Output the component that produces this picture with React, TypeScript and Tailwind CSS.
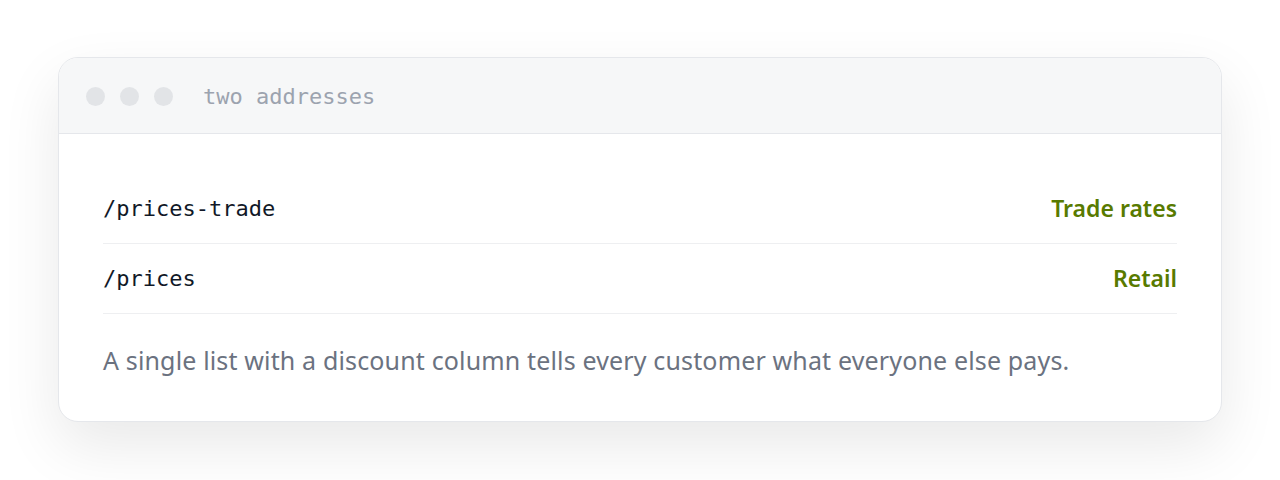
const mono = "font-['Consolas','DejaVu_Sans_Mono',monospace]"
const sans = "font-['Segoe_UI','Noto_Sans',sans-serif]"

const routes = [
  { path: '/prices-trade', label: 'Trade rates' },
  { path: '/prices', label: 'Retail' },
]

export default function App() {
  return (
    <div className="min-h-[480px] bg-white px-[58px] pt-[57px]">
      <div className="overflow-hidden rounded-[20px] border border-[#e5e7eb] bg-white shadow-[0_24px_60px_rgba(0,0,0,0.09)]">
        <div className="flex h-[76px] items-center gap-[15px] border-b border-[#e5e7eb] bg-[#f6f7f8] pt-[2px] pl-[27px]">
          <span className="h-[19px] w-[19px] rounded-full bg-[#e2e4e7]" />
          <span className="h-[19px] w-[19px] rounded-full bg-[#e2e4e7]" />
          <span className="h-[19px] w-[19px] rounded-full bg-[#e2e4e7]" />
          <span className={`${mono} ml-[15px] text-[22px] text-[#9ca3af]`}>two addresses</span>
        </div>

        <div className="px-[44px] pt-[40px] pb-[45px]">
          {routes.map((r) => (
            <div key={r.path} className="flex h-[70px] items-center justify-between border-b border-[#eeeff1]">
              <span className={`${mono} text-[22px] text-[#111827]`}>{r.path}</span>
              <span className={`${sans} text-[23px] font-semibold text-[#587a00]`}>{r.label}</span>
            </div>
          ))}
          <p className={`${sans} mt-[30px] text-[25px] leading-[32px] tracking-[0.15px] text-[#6b7280]`}>
            A single list with a discount column tells every customer what everyone else pays.
          </p>
        </div>
      </div>
    </div>
  )
}
